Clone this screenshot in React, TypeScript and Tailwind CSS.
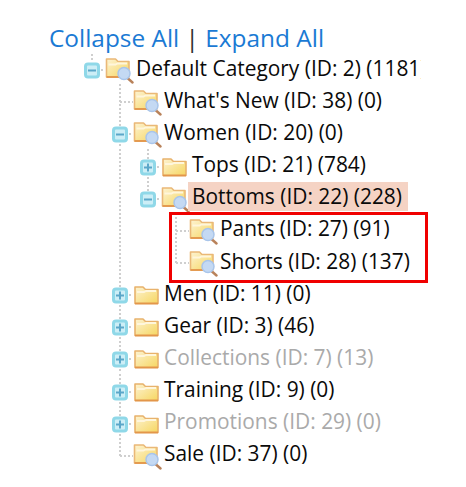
import React from "react";

type Cell = "blank" | "line" | "tee" | "corner" | "plus" | "minus" | "rootMinus" | "lastMinus";

type Node = {
  label: string;
  cells: Cell[];
  open?: boolean;
  muted?: boolean;
  selected?: boolean;
};

const rows: Node[] = [
  { label: "Default Category (ID: 2) (1181)", cells: ["rootMinus"], open: true },
  { label: "What's New (ID: 38) (0)", cells: ["blank", "tee"], open: true },
  { label: "Women (ID: 20) (0)", cells: ["blank", "minus"], open: true },
  { label: "Tops (ID: 21) (784)", cells: ["blank", "line", "plus"] },
  { label: "Bottoms (ID: 22) (228)", cells: ["blank", "line", "lastMinus"], open: true, selected: true },
  { label: "Pants (ID: 27) (91)", cells: ["blank", "line", "blank", "tee"], open: true },
  { label: "Shorts (ID: 28) (137)", cells: ["blank", "line", "blank", "corner"], open: true },
  { label: "Men (ID: 11) (0)", cells: ["blank", "plus"] },
  { label: "Gear (ID: 3) (46)", cells: ["blank", "plus"] },
  { label: "Collections (ID: 7) (13)", cells: ["blank", "plus"], muted: true },
  { label: "Training (ID: 9) (0)", cells: ["blank", "plus"] },
  { label: "Promotions (ID: 29) (0)", cells: ["blank", "plus"], muted: true },
  { label: "Sale (ID: 37) (0)", cells: ["blank", "corner"], open: true },
];

const TreeCell = ({ type }: { type: Cell }) => {
  const dots = { stroke: "#cfcfcf", strokeWidth: 2, strokeDasharray: "2 2" };
  const toggle = type === "plus" || type === "minus" || type === "rootMinus" || type === "lastMinus";
  return (
    <svg width="28" height="32" viewBox="0 0 28 32" className="shrink-0">
      {type === "rootMinus" && <line x1="14" y1="2" x2="14" y2="10" {...dots} />}
      {type === "lastMinus" && <line x1="14" y1="0" x2="14" y2="12" {...dots} />}
      {(type === "line" || type === "tee" || type === "plus" || type === "minus") && (
        <line x1="14" y1="0" x2="14" y2="32" {...dots} />
      )}
      {type === "corner" && <line x1="14" y1="0" x2="14" y2="18" {...dots} />}
      {(type === "tee" || type === "corner") && <line x1="14" y1="18" x2="27" y2="18" {...dots} />}
      {toggle && (
        <>
          <line x1="23" y1="18" x2="27" y2="18" {...dots} />
          <rect x="7.5" y="12" width="13" height="13" rx="2.5" fill="#cdeef6" stroke="#8fd8e8" strokeWidth="3" />
          <line x1="10" y1="18.5" x2="18" y2="18.5" stroke="#5ba7c9" strokeWidth="2" />
          {type === "plus" && <line x1="14" y1="14.5" x2="14" y2="22.5" stroke="#5ba7c9" strokeWidth="2" />}
        </>
      )}
    </svg>
  );
};

const Folder = ({ open }: { open?: boolean }) => (
  <svg width="29" height="32" viewBox="0 0 29 32" className="mr-[2px] -ml-px shrink-0">
    <defs>
      <linearGradient id="folderFill" x1="0" y1="0" x2="1" y2="1">
        <stop offset="0" stopColor="#fdf3d2" />
        <stop offset="1" stopColor="#f6d660" />
      </linearGradient>
    </defs>
    {open ? (
      <>
        <path
          d="M1.5 7 h9 l2.5 2.5 h11 v15.5 h-22.5 z"
          fill="url(#folderFill)"
          stroke="#eab877"
          strokeWidth="1.6"
          strokeLinejoin="round"
        />
        <path d="M3.5 12.5 h7 l2 -1 h9.5" fill="none" stroke="#fff6dc" strokeWidth="1.8" />
        <path d="M1.5 25 h14" stroke="#e3964a" strokeWidth="1.8" />
        <line x1="23" y1="26.5" x2="27.5" y2="30.5" stroke="#b9825a" strokeWidth="2.4" strokeLinecap="round" />
        <circle cx="19" cy="21.5" r="6" fill="#c4d9f3" stroke="#a9c5ea" strokeWidth="1.5" />
      </>
    ) : (
      <>
        <path
          d="M2 10 h8 l2.5 2.5 h12.5 v14 h-23 z"
          fill="url(#folderFill)"
          stroke="#e8b26c"
          strokeWidth="1.6"
          strokeLinejoin="round"
        />
        <path d="M4 15 h7 l2 -1 h10" fill="none" stroke="#fff6dc" strokeWidth="1.8" />
        <path d="M2 26.5 h23" stroke="#e3964a" strokeWidth="1.8" />
      </>
    )}
  </svg>
);

export default function App() {
  return (
    <div className="relative h-[487px] w-[466px] overflow-hidden bg-white font-['Open_Sans',sans-serif]">
      <div className="pt-[20px] pl-[49px] text-[24.4px] leading-[36px] text-[#1a7ad4]">
        <span>Collapse All</span>
        <span className="text-[#303030]"> | </span>
        <span>Expand All</span>
      </div>
      <div className="mt-[-4px] w-[421px] overflow-hidden pl-[78px]">
        {rows.map((row) => (
          <div key={row.label} className="flex h-[32.17px] items-center whitespace-nowrap">
            {row.cells.map((cell, i) => (
              <TreeCell key={i} type={cell} />
            ))}
            <Folder open={row.open} />
            <span
              className={
                "text-[20.9px] leading-[29px] " +
                (row.muted ? "text-[#aaaaaa] " : "text-[#0a0a0a] ") +
                (row.selected ? "-ml-[4px] bg-[#f5d3c4] pr-[6px] pl-[4px]" : "")
              }
            >
              {row.label}
            </span>
          </div>
        ))}
      </div>
      {/* red annotation box */}
      <div className="absolute top-[212px] left-[169px] h-[71px] w-[259px] border-[3px] border-[#f00000]" />
    </div>
  );
}
